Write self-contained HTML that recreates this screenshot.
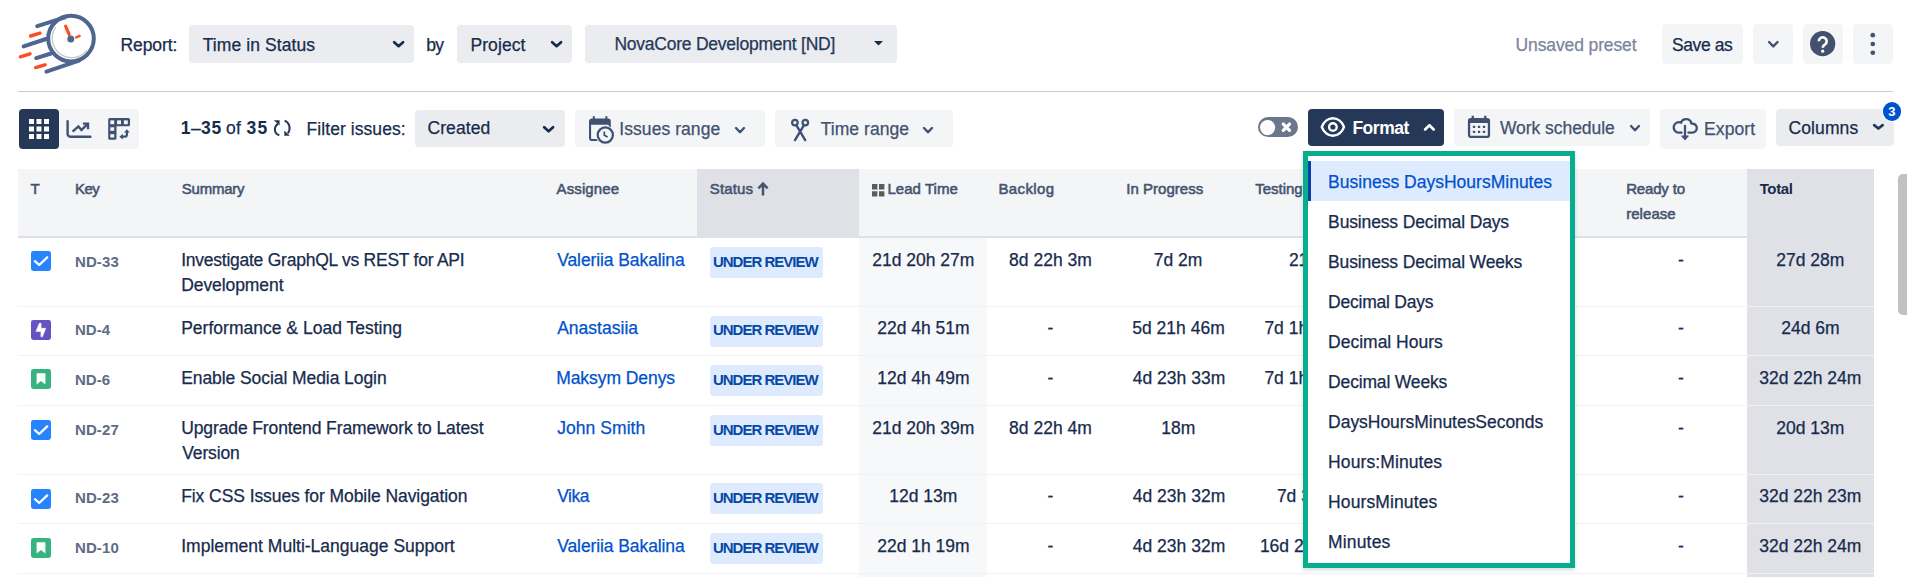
<!DOCTYPE html>
<html lang="en"><head><meta charset="utf-8"><title>Time in Status</title>
<style>
html,body{margin:0;padding:0}
body{width:1907px;height:577px;overflow:hidden;background:#fff;position:relative;font-family:"Liberation Sans", sans-serif}
.t{position:absolute;white-space:pre;}
svg{position:absolute;overflow:visible}
</style></head>
<body>
<svg style="left:10px;top:5px;" width="100" height="80" viewBox="0 0 100 80">
<g fill="none" stroke-linecap="round">
 <g stroke="#4f6690" stroke-width="4">
  <circle cx="61" cy="33.6" r="22.8"/>
  <path d="M27.2 21.2 L55 12.3"/>
  <path d="M13.6 41.4 L36 34"/>
  <path d="M26.2 53.2 L41 48.5"/>
  <path d="M36.4 66.6 L69 55.6"/>
 </g>
 <g stroke="#ff4c25" stroke-width="3.4">
  <path d="M20.6 31 L30 28.2"/>
  <path d="M10.4 51.8 L20 48.8"/>
  <path d="M25.6 62.6 L35 59.8"/>
 </g>
 <path d="M55.6 21.2 L59.2 29.6" stroke="#ff4c25" stroke-width="3.2"/>
 <path d="M66.2 32.4 L69.6 30.9" stroke="#ff4c25" stroke-width="2.4"/>
 <path d="M45.4 22.6 A19.4 19.4 0 0 0 76.4 45.8" stroke="#c4c4c4" stroke-width="1.2"/>
</g>
<circle cx="60.8" cy="34" r="3.5" fill="#4f6690"/>
</svg>
<span class="t" style="left:120.50px;top:35px;font-size:17.5px;line-height:20px;color:#172b4d;-webkit-text-stroke:0.25px currentColor;letter-spacing:-0.083px;">Report:</span>
<div style="position:absolute;left:189px;top:25px;width:225px;height:38px;background:#ebecf0;border-radius:4px;"></div>
<span class="t" style="left:202.70px;top:35px;font-size:17.5px;line-height:20px;color:#172b4d;-webkit-text-stroke:0.25px currentColor;letter-spacing:0.085px;">Time in Status</span>
<svg style="left:393px;top:40.7px;" width="11.2" height="6.5" viewBox="0 0 11.2 6.5"><path d="M1.15 1.15 L5.60 5.18 L10.05 1.15" fill="none" stroke="#172b4d" stroke-width="2.7" stroke-linecap="round" stroke-linejoin="round"/></svg>
<span class="t" style="left:426.30px;top:35px;font-size:17.5px;line-height:20px;color:#172b4d;-webkit-text-stroke:0.25px currentColor;letter-spacing:-0.800px;">by</span>
<div style="position:absolute;left:457px;top:25px;width:115px;height:38px;background:#ebecf0;border-radius:4px;"></div>
<span class="t" style="left:470.40px;top:35px;font-size:17.5px;line-height:20px;color:#172b4d;-webkit-text-stroke:0.25px currentColor;letter-spacing:0.100px;">Project</span>
<svg style="left:551.3px;top:40.7px;" width="11.2" height="6.5" viewBox="0 0 11.2 6.5"><path d="M1.15 1.15 L5.60 5.18 L10.05 1.15" fill="none" stroke="#172b4d" stroke-width="2.7" stroke-linecap="round" stroke-linejoin="round"/></svg>
<div style="position:absolute;left:585px;top:25px;width:312px;height:38px;background:#ebecf0;border-radius:4px;"></div>
<span class="t" style="left:614.40px;top:34px;font-size:17.5px;line-height:20px;color:#253858;-webkit-text-stroke:0.25px currentColor;letter-spacing:-0.237px;">NovaCore Development [ND]</span>
<svg style="left:874.3px;top:41.3px;" width="9" height="4.6" viewBox="0 0 9 4.6"><path d="M0 0 H9 L4.5 4.6 Z" fill="#172b4d"/></svg>
<span class="t" style="left:1515.60px;top:35px;font-size:17.5px;line-height:20px;color:#7a869a;-webkit-text-stroke:0.25px currentColor;letter-spacing:-0.123px;">Unsaved preset</span>
<div style="position:absolute;left:1662px;top:24px;width:81px;height:40px;background:#f4f5f7;border-radius:4px;"></div>
<span class="t" style="left:1671.90px;top:35px;font-size:17.5px;line-height:20px;color:#172b4d;-webkit-text-stroke:0.25px currentColor;letter-spacing:-0.383px;">Save as</span>
<div style="position:absolute;left:1753px;top:24px;width:40px;height:40px;background:#f4f5f7;border-radius:4px;"></div>
<svg style="left:1767.6px;top:41.4px;" width="10.6" height="6.6" viewBox="0 0 10.6 6.6"><path d="M1.02 1.02 L5.30 5.43 L9.58 1.02" fill="none" stroke="#42526e" stroke-width="2.4" stroke-linecap="round" stroke-linejoin="round"/></svg>
<div style="position:absolute;left:1803px;top:24px;width:40px;height:40px;background:#f4f5f7;border-radius:4px;"></div>
<svg style="left:1810.35px;top:31.1px;" width="25.3" height="25.3" viewBox="0 0 25 25"><circle cx="12.5" cy="12.5" r="12.5" fill="#42526e"/><path d="M8.7 10.2 a3.9 3.9 0 1 1 5.9 3.3 c-1.3 .8 -2 1.4 -2 3" fill="none" stroke="#fff" stroke-width="2.6" stroke-linecap="butt"/><circle cx="12.5" cy="19.9" r="1.6" fill="#fff"/></svg>
<div style="position:absolute;left:1853px;top:24px;width:40px;height:40px;background:#f4f5f7;border-radius:4px;"></div>
<svg style="left:1868px;top:30px;" width="10" height="28" viewBox="0 0 10 28"><circle cx="4.8" cy="5.2" r="2.35" fill="#42526e"/><circle cx="4.8" cy="14" r="2.35" fill="#42526e"/><circle cx="4.8" cy="22.75" r="2.35" fill="#42526e"/></svg>
<div style="position:absolute;left:18px;top:91px;width:1875px;height:1px;background:#cccccc;border-radius:0px;"></div>
<div style="position:absolute;left:19px;top:109px;width:120px;height:40px;background:#f4f5f7;border-radius:4px;"></div>
<div style="position:absolute;left:19px;top:109px;width:40px;height:40px;background:#253858;border-radius:4px;"></div>
<svg style="left:29px;top:119px;" width="20" height="20" viewBox="0 0 20 20"><rect x="0.0" y="0.0" width="5" height="5" fill="#fff"/><rect x="7.5" y="0.0" width="5" height="5" fill="#fff"/><rect x="15.0" y="0.0" width="5" height="5" fill="#fff"/><rect x="0.0" y="7.5" width="5" height="5" fill="#fff"/><rect x="7.5" y="7.5" width="5" height="5" fill="#fff"/><rect x="15.0" y="7.5" width="5" height="5" fill="#fff"/><rect x="0.0" y="15.0" width="5" height="5" fill="#fff"/><rect x="7.5" y="15.0" width="5" height="5" fill="#fff"/><rect x="15.0" y="15.0" width="5" height="5" fill="#fff"/></svg>
<svg style="left:60px;top:110px;" width="40" height="40" viewBox="0 0 40 40"><g fill="none" stroke="#3f5173" stroke-width="2.4" stroke-linejoin="miter" stroke-linecap="round"><path d="M7.6 11.1 V24 a2.7 2.7 0 0 0 2.7 2.7 H30.4"/><path d="M12.6 21.7 L18.4 16.4 L21.5 20 L27.4 14.2" stroke-linecap="butt"/><path d="M22.9 13.6 H28 V19.2" stroke-linecap="butt"/></g></svg>
<svg style="left:107px;top:117px;" width="24" height="24" viewBox="0 0 24 24"><path d="M2.8 1 H21.4 a1.6 1.6 0 0 1 1.6 1.6 V7.7 a1.6 1.6 0 0 1 -1.6 1.6 H9.5 V21.2 a1.6 1.6 0 0 1 -1.6 1.6 H2.8 a1.6 1.6 0 0 1 -1.6 -1.6 V2.6 a1.6 1.6 0 0 1 1.6 -1.6 Z" fill="#3f5173"/><rect x="3.3" y="3.4" width="3.9" height="3.8" fill="#f4f5f7"/><rect x="10.1" y="3.4" width="3.9" height="3.8" fill="#f4f5f7"/><rect x="16.9" y="3.4" width="3.9" height="3.8" fill="#f4f5f7"/><rect x="3.3" y="10.3" width="3.9" height="3.5" fill="#f4f5f7"/><rect x="3.3" y="17.2" width="3.9" height="3.3" fill="#f4f5f7"/><path d="M19.9 14.4 V17.6 a2.1 2.1 0 0 1 -2.1 2.1 H15" fill="none" stroke="#3f5173" stroke-width="2.2"/><path d="M17 15.6 L19.9 12.2 L22.8 15.6 Z M15.8 16.8 L12.4 19.7 L15.8 22.6 Z" fill="#3f5173"/></svg>
<span class="t" style="left:180.80px;top:118px;font-size:17.5px;line-height:20px;color:#172b4d;font-weight:700;">1</span>
<span class="t" style="left:190.90px;top:118px;font-size:17.5px;line-height:20px;color:#172b4d;-webkit-text-stroke:0.25px currentColor;">–</span>
<span class="t" style="left:200.90px;top:118px;font-size:17.5px;line-height:20px;color:#172b4d;font-weight:700;letter-spacing:0.900px;">35</span>
<span class="t" style="left:226.10px;top:118px;font-size:17.5px;line-height:20px;color:#172b4d;-webkit-text-stroke:0.25px currentColor;letter-spacing:0.100px;">of</span>
<span class="t" style="left:246.50px;top:118px;font-size:17.5px;line-height:20px;color:#172b4d;font-weight:700;letter-spacing:1.200px;">35</span>
<svg style="left:272px;top:119px;" width="20" height="18" viewBox="0 0 20 18"><g fill="none" stroke="#253858" stroke-width="2" stroke-linecap="butt"><path d="M5.9 4.9 C1.2 8.6 2.2 14.6 7.3 16.3"/><path d="M12.6 1.6 C17.8 3.6 19 10 15.9 14.4"/></g><path d="M1.8 1.3 H7.6 V6.6 Z M12.3 11.6 V16.8 H17.8 Z" fill="#253858"/></svg>
<span class="t" style="left:306.60px;top:119px;font-size:17.5px;line-height:20px;color:#172b4d;-webkit-text-stroke:0.25px currentColor;letter-spacing:0.062px;">Filter issues:</span>
<div style="position:absolute;left:415px;top:110px;width:150px;height:37px;background:#ebecf0;border-radius:4px;"></div>
<span class="t" style="left:427.40px;top:118px;font-size:17.5px;line-height:20px;color:#172b4d;-webkit-text-stroke:0.25px currentColor;letter-spacing:0.100px;">Created</span>
<svg style="left:543.4px;top:125.6px;" width="11.2" height="6.6" viewBox="0 0 11.2 6.6"><path d="M1.15 1.15 L5.60 5.28 L10.05 1.15" fill="none" stroke="#172b4d" stroke-width="2.7" stroke-linecap="round" stroke-linejoin="round"/></svg>
<div style="position:absolute;left:575px;top:110px;width:190px;height:37px;background:#f4f5f7;border-radius:4px;"></div>
<svg style="left:588px;top:115px;" width="27" height="30" viewBox="0 0 27 30"><g fill="none" stroke="#3f5173" stroke-width="2.1"><rect x="2.05" y="4.45" width="19.7" height="20.6" rx="1.8"/></g><path d="M2 4.4 H21.8 V9.7 H2 Z M4.8 1.2 H6.9 V4.6 H4.8 Z M17.3 1.2 H19.4 V4.6 H17.3 Z" fill="#3f5173"/><circle cx="17.3" cy="20" r="9.6" fill="#f4f5f7"/><circle cx="17.3" cy="20" r="7.6" fill="#f4f5f7" stroke="#3f5173" stroke-width="2.2"/><path d="M16.3 16.4 V20.2 L19.6 22.1" fill="none" stroke="#3f5173" stroke-width="1.7"/></svg>
<span class="t" style="left:619.30px;top:119px;font-size:17.5px;line-height:20px;color:#42526e;-webkit-text-stroke:0.25px currentColor;letter-spacing:0.064px;">Issues range</span>
<svg style="left:735.2px;top:127.2px;" width="10" height="6.4" viewBox="0 0 10 6.4"><path d="M1.02 1.02 L5.00 5.23 L8.98 1.02" fill="none" stroke="#3f5173" stroke-width="2.4" stroke-linecap="round" stroke-linejoin="round"/></svg>
<div style="position:absolute;left:775px;top:110px;width:178px;height:37px;background:#f4f5f7;border-radius:4px;"></div>
<svg style="left:790px;top:118px;" width="20" height="24" viewBox="0 0 20 24"><g fill="none" stroke="#3f5173" stroke-width="2.2" stroke-linecap="round"><circle cx="4.9" cy="4.6" r="2.8"/><circle cx="15.3" cy="4.6" r="2.8"/><path d="M6.6 7.6 L15.2 22.1 M13.7 7.6 L5 22.1" stroke-width="2.4"/></g></svg>
<span class="t" style="left:820.70px;top:119px;font-size:17.5px;line-height:20px;color:#42526e;-webkit-text-stroke:0.25px currentColor;letter-spacing:0.044px;">Time range</span>
<svg style="left:923px;top:127.2px;" width="10" height="6.4" viewBox="0 0 10 6.4"><path d="M1.02 1.02 L5.00 5.23 L8.98 1.02" fill="none" stroke="#3f5173" stroke-width="2.4" stroke-linecap="round" stroke-linejoin="round"/></svg>
<div style="position:absolute;left:1258.1px;top:117px;width:39.7px;height:19.8px;background:#6b778c;border-radius:10px;"></div>
<svg style="left:1259.7px;top:119.7px;" width="15.2" height="15.2" viewBox="0 0 15.2 15.2"><circle cx="7.6" cy="7.6" r="7.6" fill="#fff"/></svg>
<svg style="left:1281px;top:122px;" width="10" height="10" viewBox="0 0 10 10"><path d="M2.3 2.1 L8.5 8.3 M8.5 2.1 L2.3 8.3" stroke="#fff" stroke-width="3.3" stroke-linecap="round"/></svg>
<div style="position:absolute;left:1308px;top:109px;width:136px;height:37px;background:#253858;border-radius:4px;"></div>
<svg style="left:1320px;top:117px;" width="26" height="20" viewBox="0 0 26 20"><path d="M1.8 10 C3.6 5 8 1.25 12.9 1.25 S22.2 5 24 10 C22.2 15 17.8 18.75 12.9 18.75 S3.6 15 1.8 10 Z" fill="none" stroke="#fff" stroke-width="2.4" stroke-linejoin="round"/><circle cx="12.9" cy="10" r="3.8" fill="none" stroke="#fff" stroke-width="2.4"/></svg>
<span class="t" style="left:1352.40px;top:118px;font-size:17.5px;line-height:20px;color:#fff;font-weight:700;letter-spacing:-0.460px;">Format</span>
<svg style="left:1423.7px;top:123.5px;" width="10.8" height="6.6" viewBox="0 0 10.8 6.6"><path d="M1.10 5.49 L5.40 1.27 L9.70 5.49" fill="none" stroke="#fff" stroke-width="2.6" stroke-linecap="round" stroke-linejoin="round"/></svg>
<div style="position:absolute;left:1454px;top:109px;width:196px;height:37px;background:#f4f5f7;border-radius:4px;"></div>
<svg style="left:1467px;top:115px;" width="24" height="24" viewBox="0 0 24 24"><rect x="2.05" y="4.15" width="19.9" height="17.8" rx="2" fill="none" stroke="#3f5173" stroke-width="2.3"/><path d="M1.6 4 H22.4 V7.9 H1.6 Z M4.6 .8 H6.9 V4 H4.6 Z M17.1 .8 H19.4 V4 H17.1 Z" fill="#3f5173"/><rect x="5.9" y="10.700000000000001" width="2.2" height="2.2" rx=".5" fill="#3f5173"/><rect x="10.9" y="10.700000000000001" width="2.2" height="2.2" rx=".5" fill="#3f5173"/><rect x="15.9" y="10.700000000000001" width="2.2" height="2.2" rx=".5" fill="#3f5173"/><rect x="5.9" y="15.799999999999999" width="2.2" height="2.2" rx=".5" fill="#3f5173"/><rect x="10.9" y="15.799999999999999" width="2.2" height="2.2" rx=".5" fill="#3f5173"/><rect x="15.9" y="15.799999999999999" width="2.2" height="2.2" rx=".5" fill="#3f5173"/></svg>
<span class="t" style="left:1499.90px;top:118px;font-size:17.5px;line-height:20px;color:#42526e;-webkit-text-stroke:0.25px currentColor;letter-spacing:-0.042px;">Work schedule</span>
<svg style="left:1629.7px;top:124.6px;" width="10" height="6.4" viewBox="0 0 10 6.4"><path d="M1.02 1.02 L5.00 5.23 L8.98 1.02" fill="none" stroke="#3f5173" stroke-width="2.4" stroke-linecap="round" stroke-linejoin="round"/></svg>
<div style="position:absolute;left:1660px;top:109px;width:106px;height:40px;background:#f4f5f7;border-radius:4px;"></div>
<svg style="left:1672px;top:117px;" width="26" height="24" viewBox="0 0 26 24"><g fill="none" stroke="#3f5173" stroke-width="2.3" stroke-linecap="round" stroke-linejoin="round"><path d="M9.6 15.6 H6.9 A5.2 5.2 0 1 1 9.1 5.7 A5.3 5.3 0 0 1 19.4 6.7 A4.5 4.5 0 1 1 20.1 15.6 H16.4"/><path d="M13 9 V18.6"/></g><path d="M9.6 18.9 H16.4 L13 23 Z" fill="#3f5173" stroke="#3f5173" stroke-width=".9" stroke-linejoin="round"/></svg>
<span class="t" style="left:1704.10px;top:119px;font-size:17.5px;line-height:20px;color:#42526e;-webkit-text-stroke:0.25px currentColor;letter-spacing:0.080px;">Export</span>
<div style="position:absolute;left:1776px;top:109px;width:118px;height:37px;background:#ebecf0;border-radius:4px;"></div>
<span class="t" style="left:1788.50px;top:118px;font-size:17.5px;line-height:20px;color:#172b4d;-webkit-text-stroke:0.25px currentColor;letter-spacing:0.100px;">Columns</span>
<svg style="left:1873px;top:124px;" width="10.8" height="5.9" viewBox="0 0 10.8 5.9"><path d="M1.15 1.15 L5.40 4.58 L9.65 1.15" fill="none" stroke="#253858" stroke-width="2.7" stroke-linecap="round" stroke-linejoin="round"/></svg>
<div style="position:absolute;left:1881.5px;top:100.9px;width:21px;height:21px;background:#fff;border-radius:11px;"></div>
<div style="position:absolute;left:1882.8px;top:102.2px;width:18.4px;height:18.4px;background:#0052cc;border-radius:10px;"></div>
<span class="t" style="left:1888.20px;top:104px;font-size:13px;line-height:15px;color:#fff;font-weight:700;">3</span>
<div style="position:absolute;left:18px;top:169px;width:1856px;height:67.5px;background:#f4f5f7;border-radius:0px;"></div>
<div style="position:absolute;left:697.2px;top:169px;width:161.6px;height:67.5px;background:#dfe1e6;border-radius:0px;"></div>
<div style="position:absolute;left:18px;top:236px;width:1856px;height:2px;background:#dfe1e6;border-radius:0px;"></div>
<div style="position:absolute;left:858.8px;top:238px;width:127.8px;height:339px;background:#f7f8f9;border-radius:0px;"></div>
<div style="position:absolute;left:1747px;top:169px;width:127px;height:408px;background:#dfe1e6;border-radius:0px;"></div>
<span class="t" style="left:30.60px;top:180px;font-size:15px;line-height:17px;color:#44546f;-webkit-text-stroke:0.55px currentColor;">T</span>
<span class="t" style="left:75.00px;top:180px;font-size:15px;line-height:17px;color:#44546f;-webkit-text-stroke:0.55px currentColor;letter-spacing:-0.600px;">Key</span>
<span class="t" style="left:181.80px;top:180px;font-size:15px;line-height:17px;color:#44546f;-webkit-text-stroke:0.55px currentColor;letter-spacing:-0.250px;">Summary</span>
<span class="t" style="left:556.50px;top:180px;font-size:15px;line-height:17px;color:#44546f;-webkit-text-stroke:0.55px currentColor;letter-spacing:0.129px;">Assignee</span>
<span class="t" style="left:709.80px;top:180px;font-size:15px;line-height:17px;color:#44546f;-webkit-text-stroke:0.55px currentColor;letter-spacing:0.140px;">Status</span>
<svg style="left:757px;top:182.3px;" width="12" height="14.2" viewBox="0 0 12 14.2"><path d="M6 13.4 V2 M1.4 6.4 L6 1.6 L10.6 6.4" fill="none" stroke="#44546f" stroke-width="2.5" stroke-linejoin="miter"/></svg>
<svg style="left:871.7px;top:184.3px;" width="12.4" height="12.6" viewBox="0 0 12.4 12.6"><path d="M0 0 H5.4 V5.4 H0 Z M7 0 H12.4 V5.4 H7 Z M0 7.2 H5.4 V12.6 H0 Z M7 7.2 H12.4 V12.6 H7 Z" fill="#5c5c5c"/></svg>
<span class="t" style="left:887.40px;top:180px;font-size:15px;line-height:17px;color:#44546f;-webkit-text-stroke:0.55px currentColor;letter-spacing:0.050px;">Lead Time</span>
<span class="t" style="left:998.50px;top:180px;font-size:15px;line-height:17px;color:#44546f;-webkit-text-stroke:0.55px currentColor;letter-spacing:0.367px;">Backlog</span>
<span class="t" style="left:1126.20px;top:180px;font-size:15px;line-height:17px;color:#44546f;-webkit-text-stroke:0.55px currentColor;letter-spacing:0.030px;">In Progress</span>
<span class="t" style="left:1255.20px;top:180px;font-size:15px;line-height:17px;color:#44546f;-webkit-text-stroke:0.55px currentColor;">Testing</span>
<span class="t" style="left:1381.50px;top:180px;font-size:15px;line-height:17px;color:#44546f;-webkit-text-stroke:0.55px currentColor;">Under Review</span>
<span class="t" style="left:1626.20px;top:180px;font-size:15px;line-height:17px;color:#44546f;-webkit-text-stroke:0.55px currentColor;letter-spacing:-0.171px;">Ready to</span>
<span class="t" style="left:1626.20px;top:205px;font-size:15px;line-height:17px;color:#44546f;-webkit-text-stroke:0.55px currentColor;letter-spacing:0.050px;">release</span>
<span class="t" style="left:1759.70px;top:180px;font-size:15px;line-height:17px;color:#172b4d;font-weight:700;letter-spacing:-0.375px;">Total</span>
<div style="position:absolute;left:18px;top:306px;width:1856px;height:1px;background:#f1f2f4;border-radius:0px;"></div>
<svg style="left:31.1px;top:251.0px;" width="20" height="20" viewBox="0 0 20 20"><rect width="20" height="20" rx="2.4" fill="#2684ff"/><path d="M3.9 10.2 L8.2 14 L16.2 6.4" fill="none" stroke="#fff" stroke-width="2.3" stroke-linecap="round" stroke-linejoin="round"/></svg>
<span class="t" style="left:75.00px;top:253px;font-size:15px;line-height:17px;color:#5e6c84;font-weight:700;letter-spacing:0.100px;">ND-33</span>
<span class="t" style="left:181.20px;top:250px;font-size:17.5px;line-height:20px;color:#172b4d;-webkit-text-stroke:0.25px currentColor;letter-spacing:-0.247px;">Investigate GraphQL vs REST for API</span>
<span class="t" style="left:181.20px;top:275px;font-size:17.5px;line-height:20px;color:#172b4d;-webkit-text-stroke:0.25px currentColor;letter-spacing:-0.080px;">Development</span>
<span class="t" style="left:557.20px;top:250px;font-size:17.5px;line-height:20px;color:#0052cc;-webkit-text-stroke:0.25px currentColor;letter-spacing:-0.094px;">Valeriia Bakalina</span>
<div style="position:absolute;left:709.8px;top:246.9px;width:113.1px;height:31px;background:#deebff;border-radius:3.5px;"></div>
<span class="t" style="left:712.90px;top:253px;font-size:15px;line-height:17px;color:#0747a6;font-weight:700;letter-spacing:-0.991px;">UNDER REVIEW</span>
<span class="t" style="left:872.20px;top:250px;font-size:17.5px;line-height:20px;color:#172b4d;-webkit-text-stroke:0.25px currentColor;">21d 20h 27m</span>
<span class="t" style="left:1009.10px;top:250px;font-size:17.5px;line-height:20px;color:#172b4d;-webkit-text-stroke:0.25px currentColor;">8d 22h 3m</span>
<span class="t" style="left:1153.80px;top:250px;font-size:17.5px;line-height:20px;color:#172b4d;-webkit-text-stroke:0.25px currentColor;">7d 2m</span>
<span class="t" style="left:1288.90px;top:250px;font-size:17.5px;line-height:20px;color:#172b4d;-webkit-text-stroke:0.25px currentColor;">21m</span>
<span class="t" style="left:1678.10px;top:250px;font-size:17.5px;line-height:20px;color:#172b4d;-webkit-text-stroke:0.25px currentColor;">-</span>
<span class="t" style="left:1776.20px;top:250px;font-size:17.5px;line-height:20px;color:#172b4d;-webkit-text-stroke:0.25px currentColor;">27d 28m</span>
<span class="t" style="left:1430.50px;top:250px;font-size:17.5px;line-height:20px;color:#172b4d;-webkit-text-stroke:0.25px currentColor;">-</span>
<span class="t" style="left:1558.00px;top:250px;font-size:17.5px;line-height:20px;color:#172b4d;-webkit-text-stroke:0.25px currentColor;">-</span>
<div style="position:absolute;left:18px;top:355px;width:1856px;height:1px;background:#f1f2f4;border-radius:0px;"></div>
<svg style="left:31.1px;top:320.0px;" width="20" height="20" viewBox="0 0 20 20"><rect width="20" height="20" rx="2.4" fill="#6554c0"/><path d="M8.3 3.2 H10.1 V8.3 H14.8 L11.5 16.8 H9.9 V11.5 H4.9 Z" fill="#fff" stroke="#fff" stroke-width=".5" stroke-linejoin="round"/></svg>
<span class="t" style="left:75.00px;top:321px;font-size:15px;line-height:17px;color:#5e6c84;font-weight:700;letter-spacing:0.033px;">ND-4</span>
<span class="t" style="left:181.20px;top:318px;font-size:17.5px;line-height:20px;color:#172b4d;-webkit-text-stroke:0.25px currentColor;letter-spacing:0.012px;">Performance &amp; Load Testing</span>
<span class="t" style="left:557.20px;top:318px;font-size:17.5px;line-height:20px;color:#0052cc;-webkit-text-stroke:0.25px currentColor;letter-spacing:0.011px;">Anastasiia</span>
<div style="position:absolute;left:709.8px;top:315.5px;width:113.1px;height:31px;background:#deebff;border-radius:3.5px;"></div>
<span class="t" style="left:712.90px;top:321px;font-size:15px;line-height:17px;color:#0747a6;font-weight:700;letter-spacing:-0.991px;">UNDER REVIEW</span>
<span class="t" style="left:877.20px;top:318px;font-size:17.5px;line-height:20px;color:#172b4d;-webkit-text-stroke:0.25px currentColor;">22d 4h 51m</span>
<span class="t" style="left:1047.60px;top:318px;font-size:17.5px;line-height:20px;color:#172b4d;-webkit-text-stroke:0.25px currentColor;">-</span>
<span class="t" style="left:1132.30px;top:318px;font-size:17.5px;line-height:20px;color:#172b4d;-webkit-text-stroke:0.25px currentColor;">5d 21h 46m</span>
<span class="t" style="left:1264.40px;top:318px;font-size:17.5px;line-height:20px;color:#172b4d;-webkit-text-stroke:0.25px currentColor;">7d 1h 35m</span>
<span class="t" style="left:1678.10px;top:318px;font-size:17.5px;line-height:20px;color:#172b4d;-webkit-text-stroke:0.25px currentColor;">-</span>
<span class="t" style="left:1781.20px;top:318px;font-size:17.5px;line-height:20px;color:#172b4d;-webkit-text-stroke:0.25px currentColor;">24d 6m</span>
<span class="t" style="left:1430.50px;top:318px;font-size:17.5px;line-height:20px;color:#172b4d;-webkit-text-stroke:0.25px currentColor;">-</span>
<span class="t" style="left:1558.00px;top:318px;font-size:17.5px;line-height:20px;color:#172b4d;-webkit-text-stroke:0.25px currentColor;">-</span>
<div style="position:absolute;left:18px;top:405px;width:1856px;height:1px;background:#f1f2f4;border-radius:0px;"></div>
<svg style="left:31.1px;top:369.1px;" width="20" height="20" viewBox="0 0 20 20"><rect width="20" height="20" rx="2.4" fill="#36b37e"/><path d="M5.6 4.7 a.5 .5 0 0 1 .5 -.5 H13.9 a.5 .5 0 0 1 .5 .5 V15.6 L10 12 L5.6 15.6 Z" fill="#fff"/></svg>
<span class="t" style="left:75.00px;top:371px;font-size:15px;line-height:17px;color:#5e6c84;font-weight:700;letter-spacing:0.033px;">ND-6</span>
<span class="t" style="left:181.20px;top:368px;font-size:17.5px;line-height:20px;color:#172b4d;-webkit-text-stroke:0.25px currentColor;letter-spacing:-0.075px;">Enable Social Media Login</span>
<span class="t" style="left:556.20px;top:368px;font-size:17.5px;line-height:20px;color:#0052cc;-webkit-text-stroke:0.25px currentColor;letter-spacing:-0.064px;">Maksym Denys</span>
<div style="position:absolute;left:709.8px;top:364.9px;width:113.1px;height:31px;background:#deebff;border-radius:3.5px;"></div>
<span class="t" style="left:712.90px;top:371px;font-size:15px;line-height:17px;color:#0747a6;font-weight:700;letter-spacing:-0.991px;">UNDER REVIEW</span>
<span class="t" style="left:877.20px;top:368px;font-size:17.5px;line-height:20px;color:#172b4d;-webkit-text-stroke:0.25px currentColor;">12d 4h 49m</span>
<span class="t" style="left:1047.60px;top:368px;font-size:17.5px;line-height:20px;color:#172b4d;-webkit-text-stroke:0.25px currentColor;">-</span>
<span class="t" style="left:1132.80px;top:368px;font-size:17.5px;line-height:20px;color:#172b4d;-webkit-text-stroke:0.25px currentColor;">4d 23h 33m</span>
<span class="t" style="left:1264.40px;top:368px;font-size:17.5px;line-height:20px;color:#172b4d;-webkit-text-stroke:0.25px currentColor;">7d 1h 35m</span>
<span class="t" style="left:1678.10px;top:368px;font-size:17.5px;line-height:20px;color:#172b4d;-webkit-text-stroke:0.25px currentColor;">-</span>
<span class="t" style="left:1759.20px;top:368px;font-size:17.5px;line-height:20px;color:#172b4d;-webkit-text-stroke:0.25px currentColor;">32d 22h 24m</span>
<span class="t" style="left:1430.50px;top:368px;font-size:17.5px;line-height:20px;color:#172b4d;-webkit-text-stroke:0.25px currentColor;">-</span>
<span class="t" style="left:1558.00px;top:368px;font-size:17.5px;line-height:20px;color:#172b4d;-webkit-text-stroke:0.25px currentColor;">-</span>
<div style="position:absolute;left:18px;top:474px;width:1856px;height:1px;background:#f1f2f4;border-radius:0px;"></div>
<svg style="left:31.1px;top:419.8px;" width="20" height="20" viewBox="0 0 20 20"><rect width="20" height="20" rx="2.4" fill="#2684ff"/><path d="M3.9 10.2 L8.2 14 L16.2 6.4" fill="none" stroke="#fff" stroke-width="2.3" stroke-linecap="round" stroke-linejoin="round"/></svg>
<span class="t" style="left:75.00px;top:421px;font-size:15px;line-height:17px;color:#5e6c84;font-weight:700;letter-spacing:0.100px;">ND-27</span>
<span class="t" style="left:181.20px;top:418px;font-size:17.5px;line-height:20px;color:#172b4d;-webkit-text-stroke:0.25px currentColor;letter-spacing:-0.117px;">Upgrade Frontend Framework to Latest</span>
<span class="t" style="left:182.20px;top:443px;font-size:17.5px;line-height:20px;color:#172b4d;-webkit-text-stroke:0.25px currentColor;letter-spacing:-0.117px;">Version</span>
<span class="t" style="left:557.20px;top:418px;font-size:17.5px;line-height:20px;color:#0052cc;-webkit-text-stroke:0.25px currentColor;letter-spacing:0.056px;">John Smith</span>
<div style="position:absolute;left:709.8px;top:415.2px;width:113.1px;height:31px;background:#deebff;border-radius:3.5px;"></div>
<span class="t" style="left:712.90px;top:421px;font-size:15px;line-height:17px;color:#0747a6;font-weight:700;letter-spacing:-0.991px;">UNDER REVIEW</span>
<span class="t" style="left:872.20px;top:418px;font-size:17.5px;line-height:20px;color:#172b4d;-webkit-text-stroke:0.25px currentColor;">21d 20h 39m</span>
<span class="t" style="left:1009.10px;top:418px;font-size:17.5px;line-height:20px;color:#172b4d;-webkit-text-stroke:0.25px currentColor;">8d 22h 4m</span>
<span class="t" style="left:1161.30px;top:418px;font-size:17.5px;line-height:20px;color:#172b4d;-webkit-text-stroke:0.25px currentColor;">18m</span>
<span class="t" style="left:1678.10px;top:418px;font-size:17.5px;line-height:20px;color:#172b4d;-webkit-text-stroke:0.25px currentColor;">-</span>
<span class="t" style="left:1776.20px;top:418px;font-size:17.5px;line-height:20px;color:#172b4d;-webkit-text-stroke:0.25px currentColor;">20d 13m</span>
<span class="t" style="left:1430.50px;top:418px;font-size:17.5px;line-height:20px;color:#172b4d;-webkit-text-stroke:0.25px currentColor;">-</span>
<span class="t" style="left:1558.00px;top:418px;font-size:17.5px;line-height:20px;color:#172b4d;-webkit-text-stroke:0.25px currentColor;">-</span>
<div style="position:absolute;left:18px;top:523px;width:1856px;height:1px;background:#f1f2f4;border-radius:0px;"></div>
<svg style="left:31.1px;top:488.5px;" width="20" height="20" viewBox="0 0 20 20"><rect width="20" height="20" rx="2.4" fill="#2684ff"/><path d="M3.9 10.2 L8.2 14 L16.2 6.4" fill="none" stroke="#fff" stroke-width="2.3" stroke-linecap="round" stroke-linejoin="round"/></svg>
<span class="t" style="left:75.00px;top:489px;font-size:15px;line-height:17px;color:#5e6c84;font-weight:700;letter-spacing:0.100px;">ND-23</span>
<span class="t" style="left:181.20px;top:486px;font-size:17.5px;line-height:20px;color:#172b4d;-webkit-text-stroke:0.25px currentColor;letter-spacing:-0.074px;">Fix CSS Issues for Mobile Navigation</span>
<span class="t" style="left:557.20px;top:486px;font-size:17.5px;line-height:20px;color:#0052cc;-webkit-text-stroke:0.25px currentColor;letter-spacing:-0.500px;">Vika</span>
<div style="position:absolute;left:709.8px;top:483.1px;width:113.1px;height:31px;background:#deebff;border-radius:3.5px;"></div>
<span class="t" style="left:712.90px;top:489px;font-size:15px;line-height:17px;color:#0747a6;font-weight:700;letter-spacing:-0.991px;">UNDER REVIEW</span>
<span class="t" style="left:889.20px;top:486px;font-size:17.5px;line-height:20px;color:#172b4d;-webkit-text-stroke:0.25px currentColor;">12d 13m</span>
<span class="t" style="left:1047.60px;top:486px;font-size:17.5px;line-height:20px;color:#172b4d;-webkit-text-stroke:0.25px currentColor;">-</span>
<span class="t" style="left:1132.80px;top:486px;font-size:17.5px;line-height:20px;color:#172b4d;-webkit-text-stroke:0.25px currentColor;">4d 23h 32m</span>
<span class="t" style="left:1276.90px;top:486px;font-size:17.5px;line-height:20px;color:#172b4d;-webkit-text-stroke:0.25px currentColor;">7d 32m</span>
<span class="t" style="left:1678.10px;top:486px;font-size:17.5px;line-height:20px;color:#172b4d;-webkit-text-stroke:0.25px currentColor;">-</span>
<span class="t" style="left:1759.20px;top:486px;font-size:17.5px;line-height:20px;color:#172b4d;-webkit-text-stroke:0.25px currentColor;">32d 22h 23m</span>
<span class="t" style="left:1430.50px;top:486px;font-size:17.5px;line-height:20px;color:#172b4d;-webkit-text-stroke:0.25px currentColor;">-</span>
<span class="t" style="left:1558.00px;top:486px;font-size:17.5px;line-height:20px;color:#172b4d;-webkit-text-stroke:0.25px currentColor;">-</span>
<div style="position:absolute;left:18px;top:573px;width:1856px;height:1px;background:#f1f2f4;border-radius:0px;"></div>
<svg style="left:31.1px;top:537.8px;" width="20" height="20" viewBox="0 0 20 20"><rect width="20" height="20" rx="2.4" fill="#36b37e"/><path d="M5.6 4.7 a.5 .5 0 0 1 .5 -.5 H13.9 a.5 .5 0 0 1 .5 .5 V15.6 L10 12 L5.6 15.6 Z" fill="#fff"/></svg>
<span class="t" style="left:75.00px;top:539px;font-size:15px;line-height:17px;color:#5e6c84;font-weight:700;letter-spacing:0.100px;">ND-10</span>
<span class="t" style="left:181.20px;top:536px;font-size:17.5px;line-height:20px;color:#172b4d;-webkit-text-stroke:0.25px currentColor;letter-spacing:0.006px;">Implement Multi-Language Support</span>
<span class="t" style="left:557.20px;top:536px;font-size:17.5px;line-height:20px;color:#0052cc;-webkit-text-stroke:0.25px currentColor;letter-spacing:-0.094px;">Valeriia Bakalina</span>
<div style="position:absolute;left:709.8px;top:533.3px;width:113.1px;height:31px;background:#deebff;border-radius:3.5px;"></div>
<span class="t" style="left:712.90px;top:539px;font-size:15px;line-height:17px;color:#0747a6;font-weight:700;letter-spacing:-0.991px;">UNDER REVIEW</span>
<span class="t" style="left:877.20px;top:536px;font-size:17.5px;line-height:20px;color:#172b4d;-webkit-text-stroke:0.25px currentColor;">22d 1h 19m</span>
<span class="t" style="left:1047.60px;top:536px;font-size:17.5px;line-height:20px;color:#172b4d;-webkit-text-stroke:0.25px currentColor;">-</span>
<span class="t" style="left:1132.80px;top:536px;font-size:17.5px;line-height:20px;color:#172b4d;-webkit-text-stroke:0.25px currentColor;">4d 23h 32m</span>
<span class="t" style="left:1259.90px;top:536px;font-size:17.5px;line-height:20px;color:#172b4d;-webkit-text-stroke:0.25px currentColor;">16d 22h 5m</span>
<span class="t" style="left:1678.10px;top:536px;font-size:17.5px;line-height:20px;color:#172b4d;-webkit-text-stroke:0.25px currentColor;">-</span>
<span class="t" style="left:1759.20px;top:536px;font-size:17.5px;line-height:20px;color:#172b4d;-webkit-text-stroke:0.25px currentColor;">32d 22h 24m</span>
<span class="t" style="left:1430.50px;top:536px;font-size:17.5px;line-height:20px;color:#172b4d;-webkit-text-stroke:0.25px currentColor;">-</span>
<span class="t" style="left:1558.00px;top:536px;font-size:17.5px;line-height:20px;color:#172b4d;-webkit-text-stroke:0.25px currentColor;">-</span>
<div style="position:absolute;left:1898px;top:174.3px;width:13px;height:141px;background:#c1c1c1;border-radius:5px;"></div>
<div style="position:absolute;left:1303.3px;top:151.4px;width:271.8px;height:416.4px;background:#07ad8d;border-radius:0px;box-shadow:0 2px 4px rgba(9,30,66,.16);"></div>
<div style="position:absolute;left:1308.2px;top:156.4px;width:262px;height:406.6px;background:#fff;border-radius:0px;"></div>
<div style="position:absolute;left:1308.2px;top:160.8px;width:262px;height:40px;background:#deebff;border-radius:0px;"></div>
<div style="position:absolute;left:1308.2px;top:160.8px;width:3px;height:40px;background:#0b3fa8;border-radius:0px;"></div>
<span class="t" style="left:1328.10px;top:172px;font-size:17.5px;line-height:20px;color:#0052cc;-webkit-text-stroke:0.25px currentColor;letter-spacing:0.008px;">Business DaysHoursMinutes</span>
<span class="t" style="left:1328.10px;top:212px;font-size:17.5px;line-height:20px;color:#172b4d;-webkit-text-stroke:0.25px currentColor;letter-spacing:-0.140px;">Business Decimal Days</span>
<span class="t" style="left:1328.10px;top:252px;font-size:17.5px;line-height:20px;color:#172b4d;-webkit-text-stroke:0.25px currentColor;letter-spacing:-0.143px;">Business Decimal Weeks</span>
<span class="t" style="left:1328.10px;top:292px;font-size:17.5px;line-height:20px;color:#172b4d;-webkit-text-stroke:0.25px currentColor;letter-spacing:-0.227px;">Decimal Days</span>
<span class="t" style="left:1328.10px;top:332px;font-size:17.5px;line-height:20px;color:#172b4d;-webkit-text-stroke:0.25px currentColor;letter-spacing:-0.008px;">Decimal Hours</span>
<span class="t" style="left:1328.10px;top:372px;font-size:17.5px;line-height:20px;color:#172b4d;-webkit-text-stroke:0.25px currentColor;letter-spacing:-0.167px;">Decimal Weeks</span>
<span class="t" style="left:1328.10px;top:412px;font-size:17.5px;line-height:20px;color:#172b4d;-webkit-text-stroke:0.25px currentColor;letter-spacing:-0.036px;">DaysHoursMinutesSeconds</span>
<span class="t" style="left:1328.10px;top:452px;font-size:17.5px;line-height:20px;color:#172b4d;-webkit-text-stroke:0.25px currentColor;letter-spacing:0.100px;">Hours:Minutes</span>
<span class="t" style="left:1328.10px;top:492px;font-size:17.5px;line-height:20px;color:#172b4d;-webkit-text-stroke:0.25px currentColor;letter-spacing:0.109px;">HoursMinutes</span>
<span class="t" style="left:1328.10px;top:532px;font-size:17.5px;line-height:20px;color:#172b4d;-webkit-text-stroke:0.25px currentColor;letter-spacing:0.150px;">Minutes</span>
</body></html>
